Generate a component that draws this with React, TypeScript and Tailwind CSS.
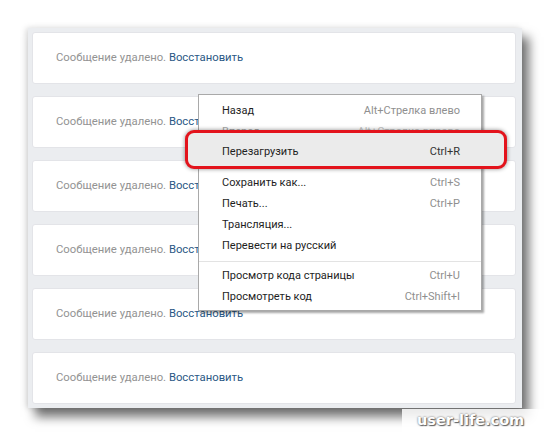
import React from 'react';

const CARDS = [0, 1, 2, 3, 4, 5];

type Item = { label: string; keys?: string; dim?: boolean } | 'sep';

const MENU: Item[] = [
  { label: 'Назад', keys: 'Alt+Стрелка влево' },
  { label: 'Вперед', keys: 'Alt+Стрелка вправо', dim: true },
  { label: 'Перезагрузить', keys: 'Ctrl+R' },
  'sep',
  { label: 'Сохранить как...', keys: 'Ctrl+S' },
  { label: 'Печать...', keys: 'Ctrl+P' },
  { label: 'Трансляция...' },
  { label: 'Перевести на русский' },
  'sep',
  { label: 'Просмотр кода страницы', keys: 'Ctrl+U' },
  { label: 'Просмотреть код', keys: 'Ctrl+Shift+I' },
];

const menuFont = { fontFamily: 'Roboto, "Liberation Sans", sans-serif' };

function Card() {
  return (
    <div className="h-[52px] shrink-0 flex items-center pl-[23px] bg-white rounded-[3px] border border-[#e3e4e8]">
      <span className="text-[11.3px] text-[#939393]" style={{ fontFamily: 'Roboto, "Liberation Sans", sans-serif' }}>
        Сообщение удалено. <span className="text-[#2a5885]">Восстановить</span>
      </span>
    </div>
  );
}

export default function App() {
  return (
    <div className="relative w-[550px] h-[438px] overflow-hidden bg-white">
      <div className="ml-[28px] mt-[28px] w-[494px] h-[380px] bg-[#ebedf0] pl-1 pr-1.5 py-1 flex flex-col gap-3 shadow-[7px_9px_10px_rgba(0,0,0,0.55),-2px_0_6px_rgba(0,0,0,0.15)]">
        {CARDS.map(i => (
          <Card key={i} />
        ))}
      </div>

      {/* context menu */}
      <div
        className="absolute left-[198px] top-[94px] w-[284px] pt-[6px] pb-0.5 bg-white border border-[#a9a9a9] shadow-[2px_2px_2px_rgba(0,0,0,0.35)]"
        style={menuFont}
      >
        {MENU.map((it, i) =>
          it === 'sep' ? (
            <div key={i} className="h-[9px] flex items-center">
              <div className="h-px w-full bg-[#e3e3e3]" />
            </div>
          ) : (
            <div key={i} className="h-[21px] flex items-center justify-between pl-[23px] pr-[21px] text-[11px]">
              <span className={it.dim ? 'text-[#a8a8a8]' : 'text-[#1e1e1e]'}>{it.label}</span>
              {it.keys && <span className={it.dim ? 'text-[#c4c4c4]' : 'text-[#8f8f8f]'}>{it.keys}</span>}
            </div>
          )
        )}
      </div>

      {/* highlighted reload item */}
      <div
        className="absolute left-[185px] top-[130px] w-[322px] h-[39px] rounded-[9px] border-[3px] border-[#e3131c] bg-[#ebebeb] flex items-center justify-between pl-[34px] pr-[44px] pt-[5px] text-[11px] shadow-[0_0_4px_rgba(0,0,0,0.45)]"
        style={menuFont}
      >
        <span className="text-[#1e1e1e]">Перезагрузить</span>
        <span className="text-[#333]">Ctrl+R</span>
      </div>

      {/* watermark */}
      <div
        className="absolute left-[402px] top-[409px] w-[148px] h-[29px] bg-white/85 flex items-start pl-[15px] pt-px text-[14.5px] font-bold text-white"
        style={{ fontFamily: '"DejaVu Sans", sans-serif', textShadow: '0 0 2px #555, 1px 1px 1px #666' }}
      >
        user-life.com
      </div>
    </div>
  );
}
